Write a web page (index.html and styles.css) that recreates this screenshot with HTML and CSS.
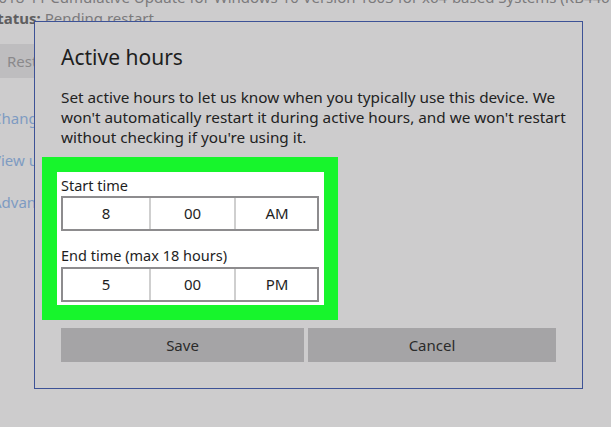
FILE: index.html
```html
<!DOCTYPE html>
<html>
<head>
<meta charset="utf-8">
<link rel="stylesheet" href="styles.css">
</head>
<body>
<div class="page">
  <div class="bg">
    <div class="bg-title">2018-11 Cumulative Update for Windows 10 Version 1803 for x64-based Systems (KB4467702)</div>
    <div class="bg-status"><b>Status:</b> Pending restart</div>
    <div class="bg-btn">Restart now</div>
    <div class="bg-link l1">Change active hours</div>
    <div class="bg-link">View update history</div>
    <div class="bg-link">Advanced options</div>
  </div>

  <div class="dialog">
    <h1 class="title">Active hours</h1>
    <p class="desc">Set active hours to let us know when you typically use this device. We won't automatically restart it during active hours, and we won't restart without checking if you're using it.</p>
    <div class="highlight">
      <div class="panel">
        <div class="label">Start time</div>
        <div class="picker">
          <div class="cell">8</div>
          <div class="cell">00</div>
          <div class="cell">AM</div>
        </div>
        <div class="label label2">End time (max 18 hours)</div>
        <div class="picker">
          <div class="cell">5</div>
          <div class="cell">00</div>
          <div class="cell">PM</div>
        </div>
      </div>
    </div>
    <div class="actions">
      <div class="btn">Save</div>
      <div class="btn">Cancel</div>
    </div>
  </div>
</div>
</body>
</html>
```

FILE: styles.css
```css
html, body {
  margin: 0;
  padding: 0;
}
body {
  background: #cdcccd;
  width: 611px;
  height: 427px;
  overflow: hidden;
  font-family: "Noto Sans", "Open Sans", sans-serif;
}
.page {
  position: relative;
  width: 611px;
  height: 427px;
  overflow: hidden;
}
.bg {
  margin-left: -8px;
  margin-top: -13px;
  color: #7b7a7c;
  font-size: 15px;
  white-space: nowrap;
}
.bg-title {
  line-height: 20px;
  margin-left: -2px;
}
.bg-status {
  line-height: 20px;
  margin-top: 1px;
  margin-left: -3px;
}
.bg-status b {
  color: #5f5e60;
}
.bg-btn {
  margin-top: 16px;
  background: #bebdbf;
  width: 130px;
  height: 34px;
  line-height: 34px;
  padding-left: 15px;
  color: #8a898b;
}
.bg-link {
  color: #7e9bc2;
  line-height: 20px;
  margin-top: 22px;
}
.bg-link.l1 {
  margin-top: 30px;
}
.dialog {
  position: absolute;
  left: 34px;
  top: 21px;
  width: 547px;
  height: 366px;
  border: 1px solid #3d5296;
  background: #cdcccd;
  box-sizing: content-box;
  padding: 0;
}
.title {
  margin: 21px 0 0 26px;
  font-size: 21px;
  font-weight: 400;
  line-height: 28px;
  color: #1e1e1e;
}
.desc {
  margin: 16px 0 0 26px;
  width: 515px;
  font-size: 15.3px;
  line-height: 20px;
  color: #222;
}
.highlight {
  margin: 10px 0 0 7px;
  width: 267px;
  padding: 15px 14px 15px 15px;
  background: #17f52c;
}
.panel {
  background: #fff;
  padding: 3px 5px 3px 4px;
}
.label {
  font-size: 14.5px;
  line-height: 20px;
  color: #1e1e1e;
  margin-bottom: 1px;
}
.label2 {
  margin-top: 14px;
  margin-bottom: 2px;
}
.picker {
  display: grid;
  grid-template-columns: 86px 85px 84px;
  column-gap: 0;
  border: 2px solid #8d8c8e;
  height: 31px;
}
.cell {
  text-align: center;
  font-size: 15px;
  line-height: 31px;
  color: #1e1e1e;
  border-left: 2px solid #cfcfcf;
}
.cell:first-child {
  border-left: none;
}
.actions {
  display: grid;
  grid-template-columns: 243px 248px;
  column-gap: 4px;
  margin: 8px 0 0 26px;
}
.btn {
  background: #a5a4a6;
  height: 34px;
  line-height: 34px;
  text-align: center;
  font-size: 15px;
  color: #2b2b2b;
}
```
